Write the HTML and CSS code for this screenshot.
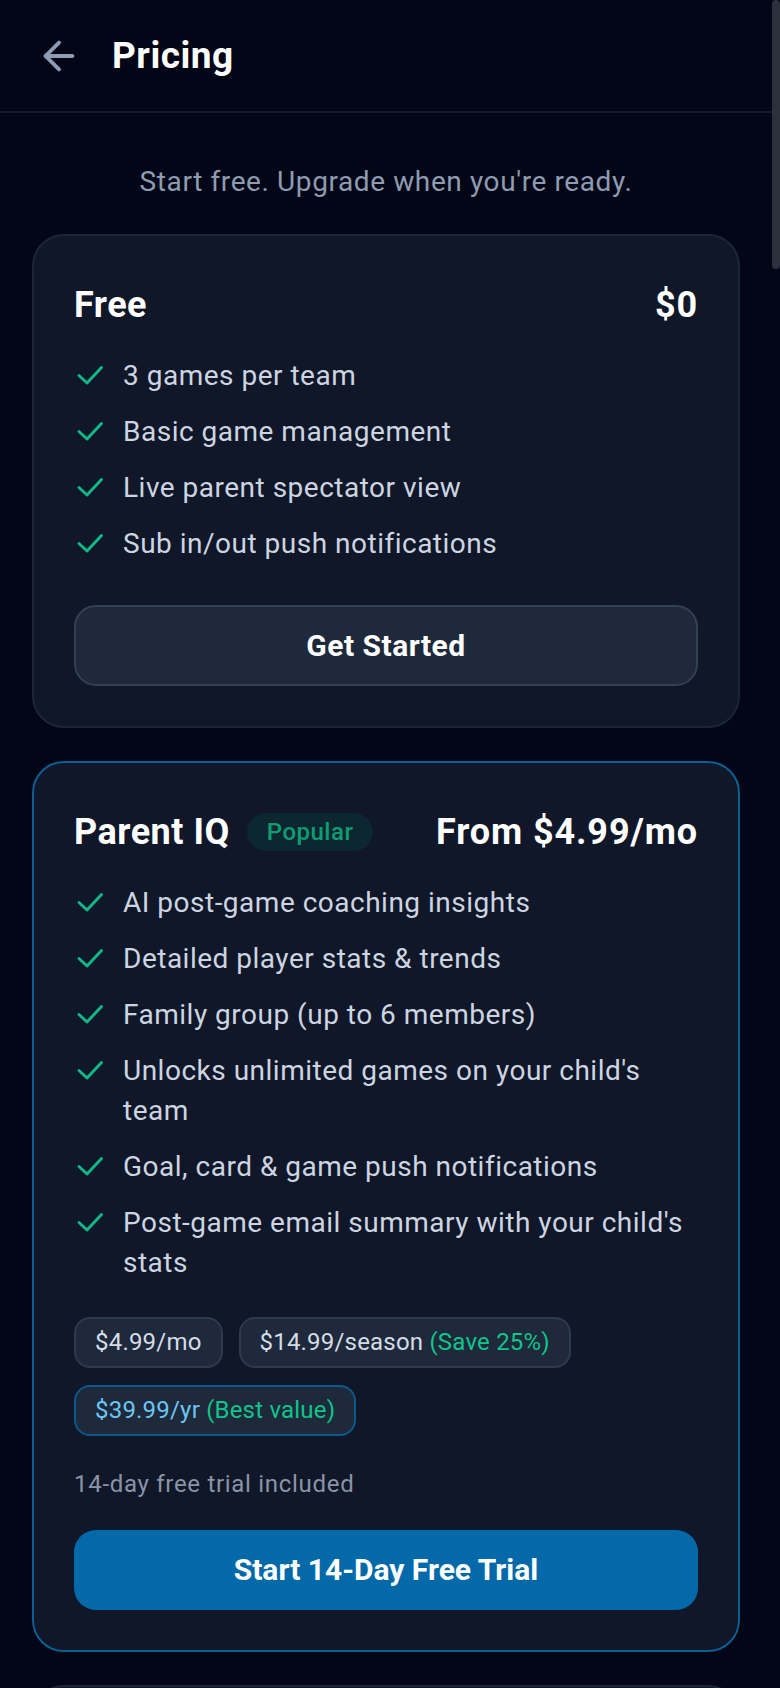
FILE: index.html
```html
<!DOCTYPE html>
<html lang="en">
<head>
  <meta charset="UTF-8">
  <meta name="viewport" content="width=device-width, initial-scale=1.0">
  <title>Pricing</title>
  <link rel="stylesheet" href="styles.css">
</head>
<body>
  <div class="app">
    <header class="topbar">
      <button class="back" aria-label="Back">
        <svg viewBox="0 0 24 24" fill="none" stroke="currentColor" stroke-width="2" stroke-linecap="round" stroke-linejoin="round">
          <path d="m12 19-7-7 7-7"/>
          <path d="M19 12H5"/>
        </svg>
      </button>
      <h1>Pricing</h1>
    </header>

    <main class="content">
      <p class="intro">Start free. Upgrade when you're ready.</p>

      <section class="plan">
        <div class="plan-head">
          <h2>Free</h2>
          <span class="price">$0</span>
        </div>
        <ul class="features">
          <li><svg class="check" viewBox="0 0 32 32"><polyline points="5,15.5 13,23 27.5,7.5"/></svg><span>3 games per team</span></li>
          <li><svg class="check" viewBox="0 0 32 32"><polyline points="5,15.5 13,23 27.5,7.5"/></svg><span>Basic game management</span></li>
          <li><svg class="check" viewBox="0 0 32 32"><polyline points="5,15.5 13,23 27.5,7.5"/></svg><span>Live parent spectator view</span></li>
          <li><svg class="check" viewBox="0 0 32 32"><polyline points="5,15.5 13,23 27.5,7.5"/></svg><span>Sub in/out push notifications</span></li>
        </ul>
        <a href="#" class="button button-dark">Get Started</a>
      </section>

      <section class="plan plan-featured">
        <div class="plan-head">
          <div class="plan-name">
            <h2>Parent IQ</h2>
            <span class="badge">Popular</span>
          </div>
          <span class="price">From $4.99/mo</span>
        </div>
        <ul class="features">
          <li><svg class="check" viewBox="0 0 32 32"><polyline points="5,15.5 13,23 27.5,7.5"/></svg><span>AI post-game coaching insights</span></li>
          <li><svg class="check" viewBox="0 0 32 32"><polyline points="5,15.5 13,23 27.5,7.5"/></svg><span>Detailed player stats &amp; trends</span></li>
          <li><svg class="check" viewBox="0 0 32 32"><polyline points="5,15.5 13,23 27.5,7.5"/></svg><span>Family group (up to 6 members)</span></li>
          <li><svg class="check" viewBox="0 0 32 32"><polyline points="5,15.5 13,23 27.5,7.5"/></svg><span>Unlocks unlimited games on your child's team</span></li>
          <li><svg class="check" viewBox="0 0 32 32"><polyline points="5,15.5 13,23 27.5,7.5"/></svg><span>Goal, card &amp; game push notifications</span></li>
          <li><svg class="check" viewBox="0 0 32 32"><polyline points="5,15.5 13,23 27.5,7.5"/></svg><span>Post-game email summary with your child's stats</span></li>
        </ul>
        <div class="options">
          <button class="option">$4.99/mo</button>
          <button class="option">$14.99/season <span class="save">(Save 25%)</span></button>
          <button class="option selected">$39.99/yr <span class="save">(Best value)</span></button>
        </div>
        <p class="trial-note">14-day free trial included</p>
        <a href="#" class="button button-primary">Start 14-Day Free Trial</a>
      </section>

      <section class="plan plan-next"></section>
    </main>
  </div>
  <div class="scroll-thumb"></div>
</body>
</html>
```

FILE: styles.css
```css
body {
  margin: 0;
  background-color: #020617;
  color: #ffffff;
  font-family: Roboto, 'Noto Sans', sans-serif;
  letter-spacing: 0.5px;
}
.app {
  width: 772px;
}
.topbar {
  display: flex;
  align-items: center;
  gap: 30px;
  height: 111px;
  padding: 0 36px;
  border-bottom: 2px solid #141c2d;
}
.back {
  display: flex;
  width: 46px;
  height: 46px;
  padding: 0;
  border: none;
  background: none;
  color: #8d9bb3;
}
.back svg {
  width: 46px;
  height: 46px;
}
.topbar h1 {
  margin: 0;
  font-size: 37px;
  font-weight: 700;
}
.content {
  padding: 49px 32px;
}
.intro {
  margin: 0 0 32px;
  text-align: center;
  font-size: 28px;
  line-height: 40px;
  letter-spacing: 0.6px;
  color: #8e9bb0;
}
.plan {
  background-color: #0f1729;
  border: 2px solid #1c2638;
  border-radius: 32px;
  padding: 40px;
  margin-bottom: 33px;
}
.plan-featured {
  border-color: #0b5f91;
}
.plan-next {
  height: 200px;
  box-sizing: border-box;
}
.plan-head {
  display: flex;
  justify-content: space-between;
  align-items: center;
  height: 57px;
}
.plan-name {
  display: flex;
  align-items: center;
  gap: 17px;
}
.plan h2,
.price {
  margin: 0;
  font-size: 36px;
  font-weight: 700;
  line-height: 56px;
}
.price {
  letter-spacing: 0.9px;
}
.badge {
  padding: 0 20px;
  line-height: 38px;
  border-radius: 19px;
  font-size: 24px;
  font-weight: 500;
  letter-spacing: 0.5px;
  color: #0f9c74;
  background-color: #0c2730;
}
.features {
  list-style: none;
  margin: 23px 0 0;
  padding: 0;
  display: flex;
  flex-direction: column;
  gap: 16px;
}
.features li {
  display: flex;
  align-items: flex-start;
  gap: 17px;
  font-size: 28px;
  line-height: 40px;
  color: #cdd5e0;
}
.check {
  flex-shrink: 0;
  width: 32px;
  height: 32px;
  margin-top: 4px;
  fill: none;
  stroke: #12b886;
  stroke-width: 3;
  stroke-linecap: round;
  stroke-linejoin: round;
}
.button {
  display: block;
  margin-top: 41px;
  height: 81px;
  box-sizing: border-box;
  border-radius: 22px;
  text-align: center;
  line-height: 77px;
  font-size: 30px;
  font-weight: 700;
  color: #ffffff;
  text-decoration: none;
}
.button-dark {
  background-color: #1e293b;
  border: 2px solid #334155;
}
.button-primary {
  margin-top: 30px;
  height: 80px;
  line-height: 80px;
  letter-spacing: 0;
  background-color: #0369a8;
}
.options {
  display: flex;
  flex-wrap: wrap;
  gap: 17px 16px;
  margin-top: 34px;
}
.option {
  padding: 6px 19px;
  border: 2px solid #2e3a4e;
  border-radius: 16px;
  background-color: #1e293b;
  font-family: inherit;
  font-size: 24px;
  line-height: 35px;
  letter-spacing: 0.2px;
  color: #d5dce6;
}
.option.selected {
  border-color: #0b5a8a;
  color: #6cc6f2;
}
.save {
  color: #10c48a;
}
.trial-note {
  margin: 32px 0 0;
  font-size: 24px;
  line-height: 32px;
  letter-spacing: 0.7px;
  color: #8a94a6;
}
.scroll-thumb {
  position: fixed;
  top: 0;
  right: 0;
  width: 8px;
  height: 269px;
  border-radius: 4px;
  background-color: #2b303c;
}
```
